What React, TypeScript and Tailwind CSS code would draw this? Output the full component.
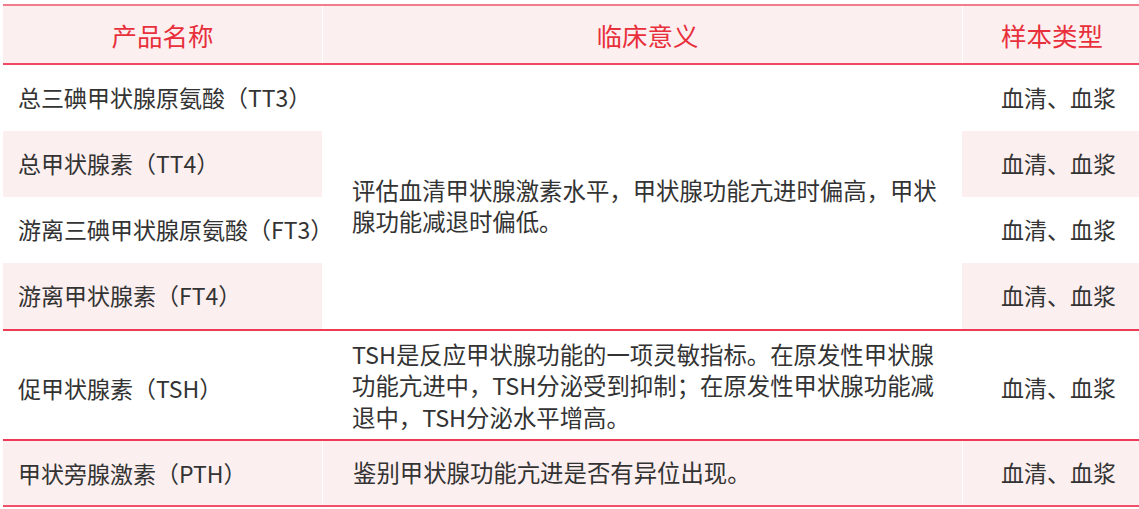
import React from "react";

const font = { fontFamily: '"Noto Sans CJK SC", "Noto Sans", sans-serif' };

const PINK = "bg-[#fcefef]";

function Sample({ pink, h }: { pink?: boolean; h: string }) {
  return (
    <div className={`${h} flex items-center pl-[39px] ${pink ? PINK : "bg-white"}`}>
      血清、血浆
    </div>
  );
}

export default function App() {
  const names = [
    "总三碘甲状腺原氨酸（TT3）",
    "总甲状腺素（TT4）",
    "游离三碘甲状腺原氨酸（FT3）",
    "游离甲状腺素（FT4）",
  ];
  return (
    <div className="bg-white w-[1139px] h-[509px] overflow-hidden pl-[3px] pt-[4px]" style={font}>
      <div className="w-[1136px] text-[23px] text-[#333333] leading-[31.5px]">
        {/* header */}
        <div className="flex h-[61px] border-t-2 border-t-[#f27b8c] border-b-2 border-b-[#ef4a62] bg-[#fcefef] text-[#e8303c] text-[25.5px]">
          <div className="w-[319px] flex items-center justify-center">产品名称</div>
          <div className="w-[640px] flex items-center justify-center border-l border-white pl-[10px]">临床意义</div>
          <div className="flex-1 flex items-center pl-[38px] border-l border-white">样本类型</div>
        </div>
        {/* thyroid group */}
        <div className="flex border-b-2 border-b-[#ee3a55]">
          <div className="w-[319px] flex flex-col">
            {names.map((n, i) => (
              <div
                key={n}
                className={`h-[66px] flex items-center pl-[15px] whitespace-nowrap ${i % 2 === 1 ? PINK : "bg-white"}`}
              >
                {n}
              </div>
            ))}
          </div>
          <div className="w-[640px] flex items-center pl-[30px] pr-[20px] pt-[18px] text-[23.4px]">
            评估血清甲状腺激素水平，甲状腺功能亢进时偏高，甲状腺功能减退时偏低。
          </div>
          <div className="flex-1 flex flex-col">
            <Sample h="h-[66px]" />
            <Sample h="h-[66px]" pink />
            <Sample h="h-[66px]" />
            <Sample h="h-[66px]" pink />
          </div>
        </div>
        {/* TSH */}
        <div className="flex h-[110px] border-b-2 border-b-[#ee3a55]">
          <div className="w-[319px] flex items-center pl-[15px] pt-[8px]">促甲状腺素（TSH）</div>
          <div className="w-[640px] flex items-center pl-[30px] pr-[20px] pt-[2px] text-[23.4px]">
            TSH是反应甲状腺功能的一项灵敏指标。在原发性甲状腺功能亢进中，TSH分泌受到抑制；在原发性甲状腺功能减退中，TSH分泌水平增高。
          </div>
          <div className="flex-1 flex items-center pl-[39px] pt-[6px]">血清、血浆</div>
        </div>
        {/* PTH */}
        <div className={`flex h-[66px] border-b-2 border-b-[#f0506a] ${PINK}`}>
          <div className="w-[319px] flex items-center pl-[15px] pt-[1px]">甲状旁腺激素（PTH）</div>
          <div className="w-[640px] flex items-center pl-[30px] pr-[20px] border-l border-white text-[23.4px]">
            鉴别甲状腺功能亢进是否有异位出现。
          </div>
          <div className="flex-1 flex items-center pl-[38px] border-l border-white">血清、血浆</div>
        </div>
      </div>
    </div>
  );
}
